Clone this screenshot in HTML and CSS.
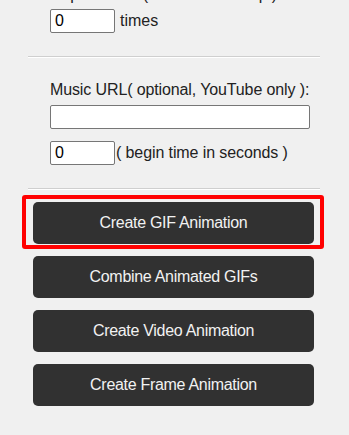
FILE: index.html
```html
<!DOCTYPE html>
<html>
<head>
<meta charset="utf-8">
<link rel="stylesheet" href="styles.css">
</head>
<body>
<div class="panel">
  <div class="field first">
    <div class="label">Repeat times( 0 for infinite loop ):</div>
    <div class="row">
      <input class="num" type="text" value="0">
      <span class="after">times</span>
    </div>
  </div>
  <hr class="sep">
  <div class="field">
    <div class="label">Music URL( optional, YouTube only ):</div>
    <input class="url" type="text" value="">
    <div class="row row-gap">
      <input class="num" type="text" value="0">
      <span class="after tight">( begin time in seconds )</span>
    </div>
  </div>
  <hr class="sep">
  <div class="buttons">
    <div class="highlight">
      <button class="btn">Create GIF Animation</button>
    </div>
    <button class="btn">Combine Animated GIFs</button>
    <button class="btn">Create Video Animation</button>
    <button class="btn">Create Frame Animation</button>
  </div>
</div>
</body>
</html>
```

FILE: styles.css
```css
html, body {
  margin: 0;
  padding: 0;
  background: #f0f0f0;
}
body {
  font-family: "Liberation Sans", Arial, sans-serif;
  font-size: 16px;
  color: #222;
}
.panel {
  width: 292px;
  margin: 0 0 0 28px;
}
.field {
  padding-left: 22px;
}
.field.first {
  margin-top: -14px;
}
.label {
  line-height: 18px;
  height: 18px;
  margin-bottom: 6px;
  white-space: nowrap;
  letter-spacing: -0.12px;
}
.field.first .label {
  margin-bottom: 5px;
}
.row {
  display: flex;
  align-items: center;
  height: 24px;
}
.row-gap {
  margin-top: 12px;
}
input {
  box-sizing: border-box;
  height: 24px;
  margin: 0;
  padding: 0 4px;
  border: 1px solid #767676;
  border-radius: 2px;
  background: #fff;
  font-family: "Liberation Sans", Arial, sans-serif;
  font-size: 16px;
  color: #000;
  outline: none;
}
.num {
  width: 65px;
}
.url {
  display: block;
  width: 260px;
}
.after {
  margin-left: 5px;
  line-height: 18px;
  white-space: nowrap;
}
.after.tight {
  margin-left: 1px;
  letter-spacing: -0.1px;
}
.sep {
  height: 0;
  margin: 23px 0;
  border: 0;
  border-top: 1px solid #cfcfcf;
  border-bottom: 1px solid #ffffff;
}
.buttons {
  display: flex;
  flex-direction: column;
  gap: 12px;
  padding-left: 5px;
  margin-top: -11px;
}
.btn {
  display: block;
  width: 281px;
  height: 42px;
  margin: 0;
  padding: 0;
  border: 0;
  border-radius: 5px;
  background: #313131;
  color: #f2f2f2;
  font-family: "Liberation Sans", Arial, sans-serif;
  font-size: 16px;
  letter-spacing: -0.3px;
  text-align: center;
}
.highlight {
  position: relative;
  width: 281px;
}
.highlight::after {
  content: "";
  position: absolute;
  top: -7px;
  left: -11px;
  right: -10px;
  bottom: -5px;
  border: 4px solid #ff0000;
  border-radius: 3px;
  pointer-events: none;
}
```
